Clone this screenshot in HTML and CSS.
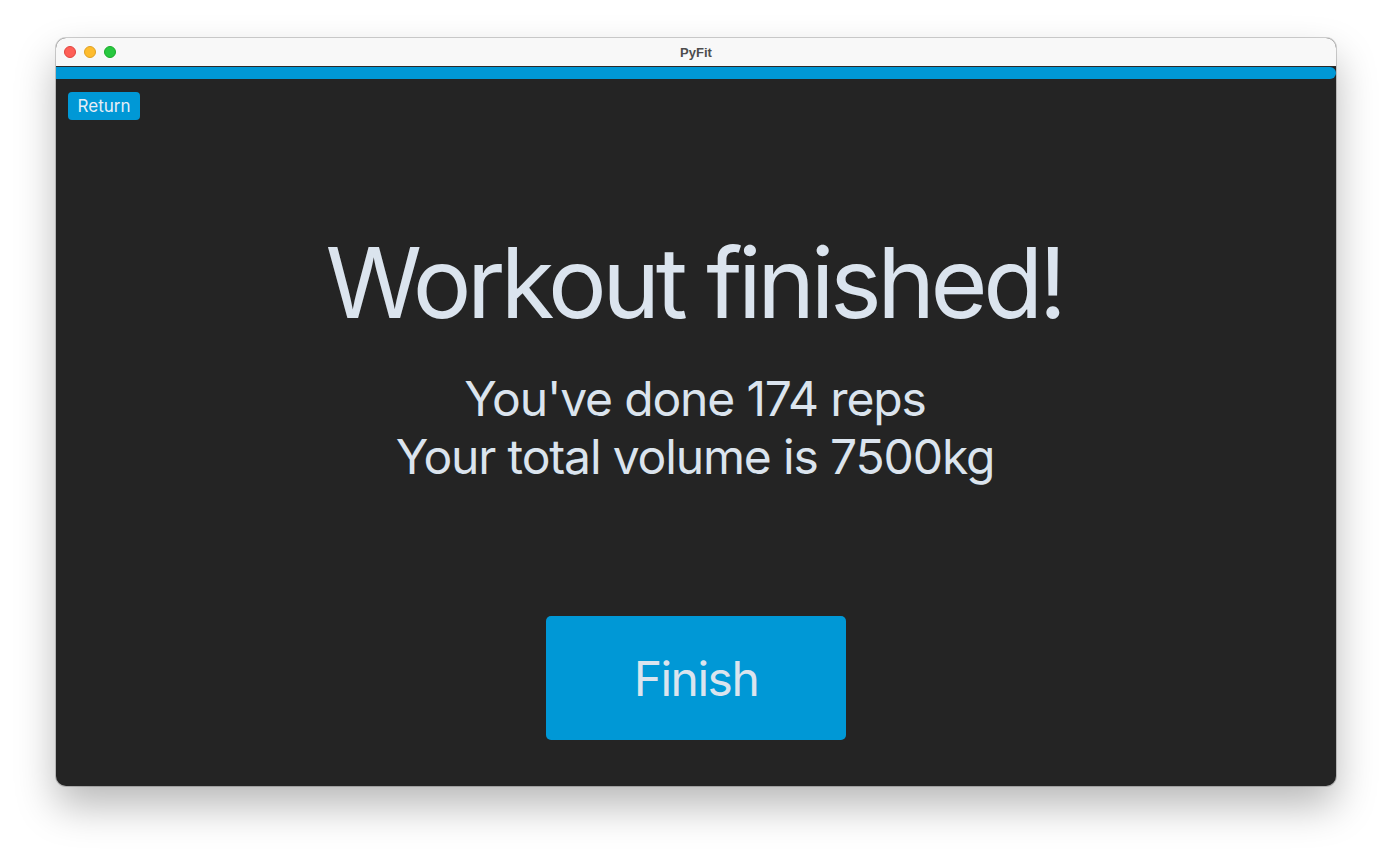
FILE: index.html
```html
<!DOCTYPE html>
<html>
<head>
<meta charset="utf-8">
<link rel="stylesheet" href="styles.css">
</head>
<body>
<div class="window">
  <div class="titlebar">
    <div class="lights">
      <span class="light red"></span>
      <span class="light yellow"></span>
      <span class="light green"></span>
    </div>
    <div class="title">PyFit</div>
  </div>
  <div class="progress"></div>
  <div class="content">
    <div class="topbar"><button class="return">Return</button></div>
    <h1 class="heading">Workout finished!</h1>
    <div class="stats">
      <p>You've done 174 reps</p>
      <p>Your total volume is 7500kg</p>
    </div>
    <button class="finish">Finish</button>
  </div>
</div>
</body>
</html>
```
FILE: styles.css
```css
html, body {
  margin: 0;
  padding: 0;
  background: #ffffff;
  width: 1392px;
  height: 860px;
  overflow: hidden;
}
body {
  font-family: Inter, "Noto Sans", sans-serif;
  padding-top: 38px;
  padding-left: 56px;
  box-sizing: border-box;
}
.window {
  width: 1280px;
  height: 748px;
  border-radius: 10px;
  overflow: hidden;
  background: #242424;
  box-shadow: 0 0 0 1px rgba(0,0,0,0.18), 0 20px 40px rgba(0,0,0,0.28);
  display: flex;
  flex-direction: column;
}
.titlebar {
  height: 29px;
  background: #f8f8f8;
  position: relative;
  display: flex;
  align-items: center;
  justify-content: center;
  border-bottom: 1px solid #2a2a2a;
  box-sizing: border-box;
}
.lights {
  position: absolute;
  left: 8px;
  top: 8px;
  display: flex;
  gap: 8px;
}
.light {
  width: 12px;
  height: 12px;
  border-radius: 50%;
  box-sizing: border-box;
}
.red { background: #fe5f57; border: 0.5px solid #e0443e; }
.yellow { background: #febc2e; border: 0.5px solid #dea123; }
.green { background: #28c840; border: 0.5px solid #1aab29; }
.title {
  font-family: "Liberation Sans", Arial, sans-serif;
  font-weight: bold;
  font-size: 13px;
  color: #4d4d4d;
  margin-top: 1px;
}
.progress {
  height: 12px;
  background: #0098d6;
  border-radius: 0 6px 6px 0;
}
.content {
  flex: 1;
  display: flex;
  flex-direction: column;
  align-items: center;
  color: #dbe4ee;
  font-family: Inter, sans-serif;
}
.topbar {
  align-self: stretch;
  padding: 13px 0 0 12px;
}
.return {
  font-family: Inter, sans-serif;
  font-size: 17px;
  background: #0098d6;
  color: #e6eef6;
  border: none;
  border-radius: 4px;
  width: 72px;
  height: 28px;
  padding: 0;
  cursor: pointer;
}
.heading {
  margin: 103px 0 0 0;
  font-weight: 400;
  font-size: 98px;
  line-height: 120px;
  letter-spacing: -4.5px;
  padding-right: 4px;
}
.stats {
  margin-top: 27px;
  text-align: center;
  font-size: 48px;
  line-height: 58px;
  letter-spacing: -1.15px;
  padding-right: 2px;
}
.stats p {
  margin: 0;
}
.finish {
  margin-top: 130px;
  width: 300px;
  height: 124px;
  border: none;
  border-radius: 5px;
  background: #0098d6;
  color: #dbe4ee;
  font-family: Inter, sans-serif;
  font-size: 48px;
  letter-spacing: -1.5px;
  cursor: pointer;
}
```
